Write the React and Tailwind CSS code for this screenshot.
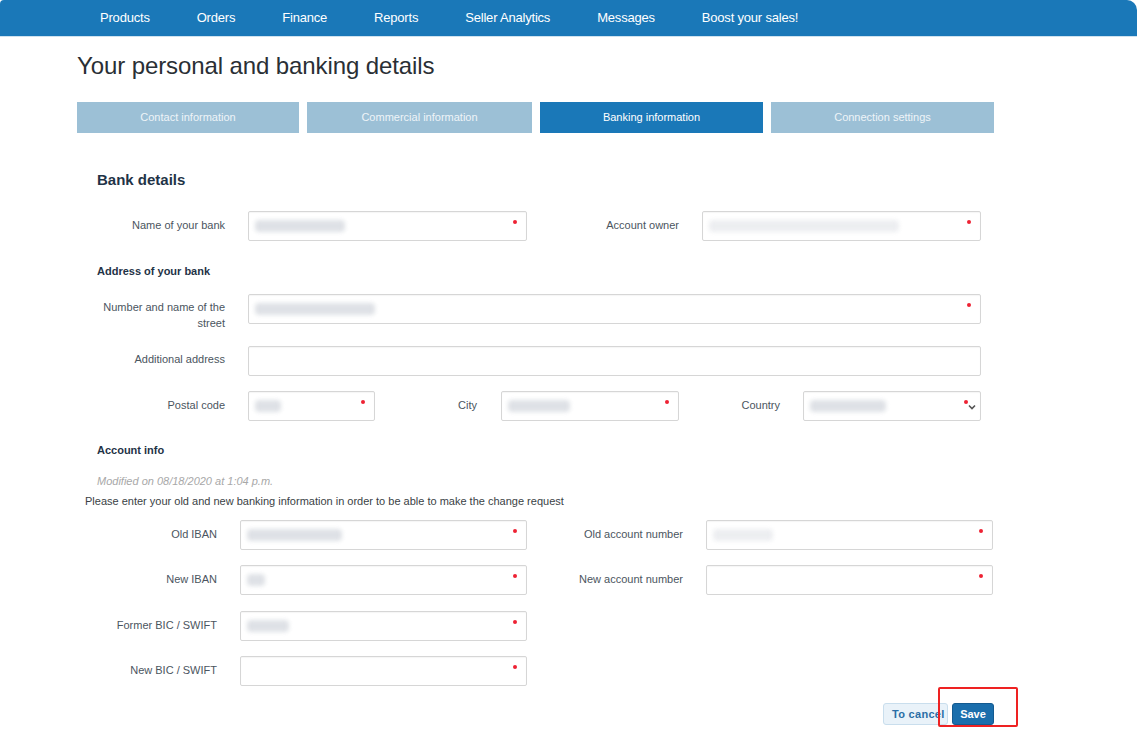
import React from 'react';

const navItems = ['Products', 'Orders', 'Finance', 'Reports', 'Seller Analytics', 'Messages', 'Boost your sales!'];

const tabs = [
  { label: 'Contact information', w: 'w-[222px]' },
  { label: 'Commercial information', w: 'w-[225px]' },
  { label: 'Banking information', w: 'w-[223px]', active: true },
  { label: 'Connection settings', w: 'w-[223px]' },
];

const Blur = ({ w, tone = 'bg-gray-300' }) => (
  <div className={`h-[12px] ${w} ${tone} opacity-70 blur-[2px] rounded-sm`} />
);

const Field = ({ w, blur, select, required = true }) => (
  <div className={`relative h-[30px] ${w} border border-[#d6d6d6] rounded-[2px] bg-white flex items-center pl-[6px] shadow-[inset_0_1px_1px_rgba(0,0,0,0.04)]`}>
    {blur}
    {required && (
      <span className={`absolute top-[8px] ${select ? 'right-[12px]' : 'right-[9px]'} w-[4px] h-[4px] rounded-full bg-[#ee2233]`} />
    )}
    {select && (
      <svg className="absolute right-[3px] top-[10px]" width="10" height="10" viewBox="0 0 10 10">
        <path d="M2 3.5 L5 6.5 L8 3.5" fill="none" stroke="#555" strokeWidth="1.6" />
      </svg>
    )}
  </div>
);

const Label = ({ w, children, className = '' }) => (
  <div className={`${w} text-right text-[11px] leading-[16px] text-[#4b5560] ${className}`}>{children}</div>
);

export default function App() {
  return (
    <div className="w-[1137px] h-[729px] bg-white overflow-hidden font-['Liberation_Sans',Arial,sans-serif]">
      {/* Nav */}
      <div className="h-[37px] bg-[#1a78b8] border-b border-[#cfe2ef] rounded-tr-[10px] rounded-tl-[4px] flex items-center pl-[100px] gap-[47px] text-[13px] text-white tracking-[-0.2px]">
        {navItems.map((n) => (
          <span key={n}>{n}</span>
        ))}
      </div>

      <div className="pl-[77px]">
        <h1 className="mt-[14px] text-[24px] leading-[30px] text-[#2a2f35] tracking-[-0.1px]">
          Your personal and banking details
        </h1>

        {/* Tabs */}
        <div className="mt-[21px] flex gap-[8px]">
          {tabs.map((t) => (
            <div
              key={t.label}
              className={`${t.w} h-[31px] flex items-center justify-center text-[11px] ${
                t.active ? 'bg-[#1a78b8] text-white' : 'bg-[#9cc0d6] text-[#eef4f8]'
              }`}
            >
              {t.label}
            </div>
          ))}
        </div>

        {/* Bank details */}
        <div className="mt-[38px] pl-[20px] text-[15px] font-bold text-[#1f3347] leading-[18px]">Bank details</div>

        <div className="mt-[22px] flex items-center">
          <Label w="w-[148px]" className="-mt-[2px]">Name of your bank</Label>
          <div className="ml-[23px]">
            <Field w="w-[279px]" blur={<Blur w="w-[90px]" />} />
          </div>
          <Label w="w-[152px]" className="-mt-[2px]">Account owner</Label>
          <div className="ml-[23px]">
            <Field w="w-[279px]" blur={<Blur w="w-[190px]" tone="bg-gray-200" />} />
          </div>
        </div>

        <div className="mt-[22px] pl-[20px] text-[11px] font-bold text-[#1f3347]">Address of your bank</div>

        {/* Street */}
        <div className="mt-[14px] h-[30px] flex items-start">
          <Label w="w-[148px]" className="pt-[5px]">
            Number and name of the
            <br />
            street
          </Label>
          <div className="ml-[23px]">
            <Field w="w-[733px]" blur={<Blur w="w-[120px]" />} />
          </div>
        </div>

        <div className="mt-[22px] flex items-center">
          <Label w="w-[148px]" className="-mt-[3px]">Additional address</Label>
          <div className="ml-[23px]">
            <Field w="w-[733px]" required={false} />
          </div>
        </div>

        <div className="mt-[15px] flex items-center">
          <Label w="w-[148px]" className="-mt-[2px]">Postal code</Label>
          <div className="ml-[23px]">
            <Field w="w-[127px]" blur={<Blur w="w-[26px]" />} />
          </div>
          <Label w="w-[102px]" className="-mt-[2px]">City</Label>
          <div className="ml-[24px]">
            <Field w="w-[178px]" blur={<Blur w="w-[62px]" />} />
          </div>
          <Label w="w-[101px]" className="-mt-[2px]">Country</Label>
          <div className="ml-[23px]">
            <Field w="w-[178px]" select blur={<Blur w="w-[76px]" />} />
          </div>
        </div>

        <div className="mt-[21px] pl-[20px] text-[11px] font-bold text-[#1f3347]">Account info</div>

        <div className="mt-[15px] pl-[20px] text-[11px] italic text-[#a8a8a8]">Modified on 08/18/2020 at 1:04 p.m.</div>
        <div className="mt-[3px] pl-[8px] text-[11px] text-[#3a3f45]">
          Please enter your old and new banking information in order to be able to make the change request
        </div>

        <div className="mt-[11px] flex items-center">
          <Label w="w-[140px]" className="-mt-[2px]">Old IBAN</Label>
          <div className="ml-[23px]">
            <Field w="w-[287px]" blur={<Blur w="w-[95px]" />} />
          </div>
          <Label w="w-[156px]" className="-mt-[2px]">Old account number</Label>
          <div className="ml-[23px]">
            <Field w="w-[287px]" blur={<Blur w="w-[60px]" tone="bg-gray-200" />} />
          </div>
        </div>

        <div className="mt-[15px] flex items-center">
          <Label w="w-[140px]" className="-mt-[2px]">New IBAN</Label>
          <div className="ml-[23px]">
            <Field w="w-[287px]" blur={<Blur w="w-[18px]" />} />
          </div>
          <Label w="w-[156px]" className="-mt-[2px]">New account number</Label>
          <div className="ml-[23px]">
            <Field w="w-[287px]" />
          </div>
        </div>

        <div className="mt-[16px] flex items-center">
          <Label w="w-[140px]" className="-mt-[3px]">Former BIC / SWIFT</Label>
          <div className="ml-[23px]">
            <Field w="w-[287px]" blur={<Blur w="w-[42px]" />} />
          </div>
        </div>

        <div className="mt-[15px] flex items-center">
          <Label w="w-[140px]" className="-mt-[3px]">New BIC / SWIFT</Label>
          <div className="ml-[23px]">
            <Field w="w-[287px]" />
          </div>
        </div>

        {/* Buttons */}
        <div className="relative mt-[17px] w-[917px] flex justify-end gap-[4px]">
          <button className="h-[22px] w-[65px] overflow-hidden whitespace-nowrap pl-[8px] text-left bg-[#e9f2f9] border border-[#c9deed] rounded-[3px] text-[11px] font-bold tracking-[0.3px] text-[#2b6ea6]">
            To cancel
          </button>
          <button className="h-[22px] w-[42px] bg-[#1a6eac] border border-[#135a90] rounded-[3px] text-[11px] font-bold text-white">
            Save
          </button>
          <div className="absolute right-[-24px] top-[-16px] w-[80px] h-[40px] border-2 border-[#ee2222] rounded-[2px] pointer-events-none" />
        </div>
      </div>
    </div>
  );
}
